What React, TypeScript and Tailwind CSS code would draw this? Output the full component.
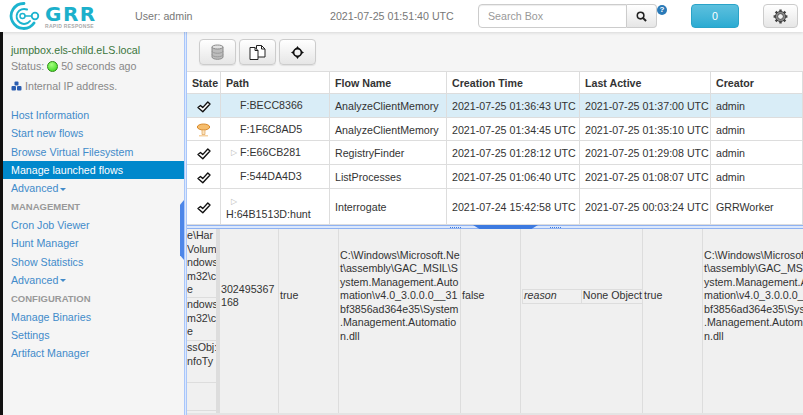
import type { ReactNode } from "react";

const FONT = "font-['Liberation_Sans',Arial,sans-serif]";

const SIDE_TOP = ["Host Information", "Start new flows", "Browse Virtual Filesystem"];
const MANAGEMENT = ["Cron Job Viewer", "Hunt Manager", "Show Statistics"];
const CONFIGURATION = ["Manage Binaries", "Settings", "Artifact Manager"];

const FLOWS = [
  { state: "ok", path: "F:BECC8366", name: "AnalyzeClientMemory", created: "2021-07-25 01:36:43 UTC", active: "2021-07-25 01:37:00 UTC", creator: "admin", h: "h-[24px]", selected: true },
  { state: "busy", path: "F:1F6C8AD5", name: "AnalyzeClientMemory", created: "2021-07-25 01:34:45 UTC", active: "2021-07-25 01:35:10 UTC", creator: "admin", h: "h-[23px]" },
  { state: "ok", path: "F:E66CB281", name: "RegistryFinder", created: "2021-07-25 01:28:12 UTC", active: "2021-07-25 01:29:08 UTC", creator: "admin", h: "h-[24px]", arrow: true },
  { state: "ok", path: "F:544DA4D3", name: "ListProcesses", created: "2021-07-25 01:06:40 UTC", active: "2021-07-25 01:08:07 UTC", creator: "admin", h: "h-[24px]" },
  { state: "ok", path: "H:64B1513D:hunt", name: "Interrogate", created: "2021-07-24 15:42:58 UTC", active: "2021-07-25 00:03:24 UTC", creator: "GRRWorker", h: "h-[36px]", arrow: true, wrap: true },
];

const DLL_PATH = "C:\\Windows\\Microsoft.Ne t\\assembly\\GAC_MSIL\\S ystem.Management.Auto mation\\v4.0_3.0.0.0__31 bf3856ad364e35\\System .Management.Automatio n.dll".split(" ");

function Logo() {
  return (
    <div className="flex w-[132px] shrink-0 items-center pl-[8px]">
      <svg width="34" height="30" viewBox="0 0 34 30" fill="none" className="shrink-0 text-[#1cb4cf]">
        <path d="M16 2.500 A12.500 12.500 0 1 0 26 22" stroke="currentColor" strokeWidth="2.800" strokeLinecap="round" />
        <path d="M19 8.500 A7.500 7.500 0 1 0 22 20" stroke="currentColor" strokeWidth="2" strokeLinecap="round" />
        <circle cx="14.500" cy="15" r="2.500" stroke="currentColor" strokeWidth="1.500" />
        <circle cx="27" cy="15" r="3.300" stroke="currentColor" strokeWidth="1.800" />
        <path d="M17 15 H23.700" stroke="currentColor" strokeWidth="1.500" />
      </svg>
      <div className="ml-[3px] mt-[3px] flex flex-col">
        <span className="h-[15px] overflow-visible text-[20px] leading-[15px] font-bold tracking-[1.5px] text-[#1cb0cb] font-['DejaVu_Sans',sans-serif]">GRR</span>
        <span className="mt-[1px] h-[6px] text-[5px] leading-[6px] font-bold tracking-[0.3px] text-[#aaa] whitespace-nowrap">RAPID RESPONSE</span>
      </div>
    </div>
  );
}

function GearIcon() {
  return (
    <svg width="15" height="15" viewBox="0 0 20 20">
      <path d="M10 .8v4M10 15.200v4M.8 10h4M15.200 10h4M3.500 3.500l2.800 2.800M13.700 13.700l2.800 2.800M16.500 3.500l-2.800 2.800M6.300 13.700l-2.800 2.800" stroke="#444" strokeWidth="3.200" />
      <circle cx="10" cy="10" r="6.800" fill="#8a8a8a" stroke="#333" strokeWidth="1" />
      <circle cx="10" cy="10" r="3.800" fill="#f0f0f0" stroke="#333" strokeWidth="1" />
    </svg>
  );
}

function Header() {
  return (
    <header className="relative z-10 flex h-[32px] shrink-0 items-center bg-white text-[10.67px] text-[#777] shadow-[0_1px_3px_rgba(0,0,0,0.12)]">
      <Logo />
      <span className="ml-[3px] w-[195px]">User: admin</span>
      <span className="w-[148px] whitespace-nowrap">2021-07-25 01:51:40 UTC</span>
      <div className="flex h-[24px] w-[179px]">
        <div className="flex w-[149px] items-center rounded-l-[4px] border border-[#ccc] bg-white pl-[9px] text-[#999] shadow-[inset_0_1px_1px_rgba(0,0,0,0.075)]">Search Box</div>
        <div className="flex w-[30px] items-center justify-center rounded-r-[4px] border border-l-0 border-[#ccc] bg-gradient-to-b from-white to-[#e6e6e6]">
          <svg width="11" height="11" viewBox="0 0 12 12" fill="none" stroke="#222">
            <circle cx="5" cy="5" r="3.600" strokeWidth="1.700" />
            <path d="M7.800 7.800 11 11" strokeWidth="2.200" />
          </svg>
        </div>
      </div>
      <div className="mb-[12px] flex h-[10px] w-[10px] items-center justify-center rounded-full bg-[#2a7ab8] text-[8px] font-bold leading-none text-white">?</div>
      <div className="ml-[24px] flex h-[24px] w-[48px] items-center justify-center rounded-[4px] border border-[#2aa3c8] bg-gradient-to-b from-[#5bc0de] to-[#2aabd2] text-white">0</div>
      <div className="ml-[24px] flex h-[24px] w-[35px] items-center justify-center rounded-[4px] border border-[#ccc] bg-gradient-to-b from-white to-[#e6e6e6]">
        <GearIcon />
      </div>
    </header>
  );
}

function NavItem({ label, active }: { label: string; active?: boolean }) {
  return (
    <div className={"flex h-[18.35px] items-center pl-[8px] " + (active ? "bg-[#0088cc] text-white" : "text-[#428bca]")}>
      {label}
    </div>
  );
}

function AdvancedItem() {
  return (
    <div className="flex h-[18.35px] items-center pl-[8px] text-[#428bca]">
      Advanced
      <span className="ml-[2px] mt-[1px] h-0 w-0 border-x-[3px] border-t-[3px] border-x-transparent border-t-[#428bca]" />
    </div>
  );
}

function NavHeading({ children }: { children: ReactNode }) {
  return <div className="flex h-[18.35px] items-center pl-[8px] text-[9.5px] font-bold text-[#999]">{children}</div>;
}

function Sidebar() {
  return (
    <aside className="w-[181px] shrink-0 bg-[#f5f5f5] pt-[10px] text-[10.67px] leading-none">
      <div className="pl-[8px] text-[#888]">
        <div className="flex h-[16px] items-center text-[#3c763d]">jumpbox.els-child.eLS.local</div>
        <div className="flex h-[16px] items-center whitespace-nowrap">
          Status:
          <span className="mx-[3px] h-[11px] w-[11px] rounded-full border border-[#2a8a12] bg-[radial-gradient(circle_at_40%_30%,#a6ff80,#2fd312)]" />
          50 seconds ago
        </div>
        <div className="mt-[3px] flex h-[18px] items-center">
          <svg width="11" height="10" viewBox="0 0 11 10" fill="#2a5db0" className="mr-[3px]">
            <rect x="3.500" y="0.500" width="4" height="4" rx="1" />
            <rect x="0.500" y="5" width="4.500" height="4.500" rx="1" />
            <rect x="6" y="5" width="4.500" height="4.500" rx="1" />
          </svg>
          Internal IP address.
        </div>
      </div>
      <nav className="mt-[11px]">
        {SIDE_TOP.map((l) => <NavItem key={l} label={l} />)}
        <NavItem label="Manage launched flows" active />
        <AdvancedItem />
        <NavHeading>MANAGEMENT</NavHeading>
        {MANAGEMENT.map((l) => <NavItem key={l} label={l} />)}
        <AdvancedItem />
        <NavHeading>CONFIGURATION</NavHeading>
        {CONFIGURATION.map((l) => <NavItem key={l} label={l} />)}
      </nav>
    </aside>
  );
}

function StateIcon({ state }: { state: string }) {
  if (state === "busy") {
    return (
      <svg width="15" height="16" viewBox="0 0 15 16">
        <ellipse cx="7.500" cy="5" rx="6.200" ry="3" fill="#f6bd6c" stroke="#d98a2b" />
        <path d="M6 8h3v4.500H6z" fill="#fbe2bc" stroke="#e0a55a" strokeWidth="0.700" />
        <path d="M3 13h9v1.500H3z" fill="#f5d2a3" />
      </svg>
    );
  }
  return (
    <svg width="14" height="12" viewBox="0 0 14 12">
      <path d="M1 6.500 3.500 4.500 5.700 6.600 10.800 1 13 3 5.800 10.800Z" fill="#fff" stroke="#111" strokeWidth="1.400" strokeLinejoin="round" />
    </svg>
  );
}

function ToolButton({ children }: { children: ReactNode }) {
  return (
    <div className="flex h-[26px] w-[37px] items-center justify-center rounded-[4px] border border-[#ccc] bg-gradient-to-b from-white to-[#e6e6e6] shadow-[0_1px_1px_rgba(0,0,0,0.08)]">
      {children}
    </div>
  );
}

function Toolbar() {
  return (
    <div className="flex h-[39px] shrink-0 gap-[3px] bg-[#f5f5f5] pl-[12px] pt-[7px]">
      <ToolButton>
        <svg width="13" height="16" viewBox="0 0 13 16">
          <path d="M1 3v10c0 1.300 2.500 2.300 5.500 2.300S12 14.300 12 13V3Z" fill="#bdbdbd" stroke="#8a8a8a" />
          <path d="M1 7c0 1.300 2.500 2.300 5.500 2.300S12 8.300 12 7M1 10.500c0 1.300 2.500 2.300 5.500 2.300s5.500-1 5.500-2.300" fill="none" stroke="#9a9a9a" />
          <ellipse cx="6.500" cy="3" rx="5.500" ry="2" fill="#e2e2e2" stroke="#8a8a8a" />
        </svg>
      </ToolButton>
      <ToolButton>
        <svg width="17" height="16" viewBox="0 0 17 16" fill="#fff" stroke="#222" strokeWidth="1">
          <path d="M7.500 1.500h5l3.500 3.500v8H7.500z" />
          <path d="M1 3.500h5l3 3v9H1z" />
          <path d="M6 3.500v3h3M12.500 1.500V5H16" fill="none" />
        </svg>
      </ToolButton>
      <ToolButton>
        <svg width="13" height="13" viewBox="0 0 14 14" fill="none">
          <circle cx="7" cy="7" r="4.200" stroke="#111" strokeWidth="1.800" />
          <path d="M7 0 9 3H5ZM7 14 5 11h4ZM0 7l3-2v4ZM14 7l-3 2V5Z" fill="#111" />
        </svg>
      </ToolButton>
    </div>
  );
}

const COLS = ["w-[34px]", "w-[109px]", "w-[117px]", "w-[133px]", "w-[131px]", "w-[92px]"];

function FlowTable() {
  const th = "flex shrink-0 items-center whitespace-nowrap border-r border-[#ddd] pl-[5px] pt-[2px]";
  return (
    <div className="shrink-0 bg-white text-[10.67px] leading-[13px] text-[#333]">
      <div className="flex h-[23px] border-y border-[#ddd] font-bold">
        {["State", "Path", "Flow Name", "Creation Time", "Last Active", "Creator"].map((t, i) => (
          <div key={t} className={th + " " + COLS[i]}>{t}</div>
        ))}
      </div>
      {FLOWS.map((f) => (
        <div key={f.path} className={"flex border-b border-[#ddd] " + f.h + (f.selected ? " bg-[#d9edf7]" : "")}>
          <div className={"flex shrink-0 items-center justify-center border-r border-[#ddd] pt-[2px] " + COLS[0]}><StateIcon state={f.state} /></div>
          <div className={"shrink-0 border-r border-[#ddd] pl-[5px] " + COLS[1] + (f.wrap ? " flex flex-col" : " flex items-center")}>
            {f.wrap ? (
              <>
                <span className="ml-[5px] mt-[6px] h-[13px] text-[8px] leading-[13px] text-[#bbb]">▷</span>
                <span className="whitespace-nowrap">{f.path}</span>
              </>
            ) : (
              <>
                <span className="w-[14px] pl-[5px] text-[8px] text-[#bbb]">{f.arrow ? "▷" : ""}</span>
                <span className="whitespace-nowrap">{f.path}</span>
              </>
            )}
          </div>
          <div className={th + " " + COLS[2]}>{f.name}</div>
          <div className={th + " " + COLS[3]}>{f.created}</div>
          <div className={th + " " + COLS[4]}>{f.active}</div>
          <div className={th + " " + COLS[5]}>{f.creator}</div>
        </div>
      ))}
    </div>
  );
}

function Lines({ lines }: { lines: string[] }) {
  return <>{lines.map((l) => <div key={l} className="whitespace-nowrap">{l}</div>)}</>;
}

function ClippedCell({ lines, h }: { lines: string[]; h: string }) {
  return (
    <div className={"overflow-hidden border-b border-[#ddd] " + h}>
      {lines.map((l) => <div key={l} className="h-[13.5px] whitespace-nowrap">{l}</div>)}
    </div>
  );
}

function Cell({ w, children }: { w: string; children: ReactNode }) {
  return (
    <div className={"h-full shrink-0 border-r border-[#ddd] pl-[1px] " + w}>
      <div className="flex h-[134px] items-center">{children}</div>
    </div>
  );
}

function DetailPane() {
  return (
    <div className="min-h-0 flex-1 overflow-hidden border-b-[2px] border-[#e4e4e4] bg-[#f0f0f0] text-[10.67px] leading-[13.5px] text-[#333]">
      <div className="flex h-full">
        <div className="w-[29px] shrink-0 overflow-hidden">
          <ClippedCell h="h-[69px]" lines={["e\\Har", "Volum", "ndows", "m32\\c", "e"]} />
          <ClippedCell h="h-[43px]" lines={["ndows", "m32\\c", "e"]} />
          <ClippedCell h="h-[42px]" lines={["ssObj:I", "nfoTy"]} />
          <ClippedCell h="h-[28px]" lines={[]} />
        </div>
        <div className="w-[4px] shrink-0 bg-[#ddd]" />
        <Cell w="w-[59px]"><div>302495367<br />168</div></Cell>
        <Cell w="w-[60px]">true</Cell>
        <Cell w="w-[122px]"><div><Lines lines={DLL_PATH} /></div></Cell>
        <Cell w="w-[60px]">false</Cell>
        <Cell w="w-[122px]">
          <div className="flex h-[15px] w-[121px] items-center border border-[#ddd]">
            <div className="flex h-full w-[60px] items-center border-r border-[#ddd] pl-[1px] italic">reason</div>
            <div className="whitespace-nowrap pl-[1px]">None Object</div>
          </div>
        </Cell>
        <Cell w="w-[60px]">true</Cell>
        <div className="h-full shrink-0 pl-[1px]">
          <div className="flex h-[134px] items-center"><div><Lines lines={DLL_PATH} /></div></div>
        </div>
      </div>
    </div>
  );
}

export default function App() {
  return (
    <div className={"relative flex h-[415px] w-[803px] flex-col overflow-hidden bg-white " + FONT}>
      <Header />
      <div className="flex min-h-0 flex-1">
        <div className="w-[3px] shrink-0 bg-[#111]" />
        <Sidebar />
        <div className="w-[3px] shrink-0 border-x border-[#a9c6fa] bg-[#dce8fc]" />
        <main className="flex min-w-0 flex-1 flex-col">
          <Toolbar />
          <FlowTable />
          <div className="h-[4px] shrink-0 border-y border-[#8fb2f2] bg-[#dce8fc]" />
          <DetailPane />
        </main>
      </div>
      {/* splitter handles sit over the pane borders */}
      <div className="absolute left-[180px] top-[200px] h-[60px] w-[4px] bg-[#4d86e8] [clip-path:polygon(100%_0,100%_100%,0_92%,0_8%)]" />
      <div className="absolute left-[473px] top-[225px] h-[4px] w-[65px] bg-[#3d7ae0] [clip-path:polygon(0_0,100%_0,90%_100%,10%_100%)]" />
      <div className="absolute left-[450px] top-[227px] h-[1px] w-[11px] border-t border-dotted border-[#3d7ae0]" />
      <div className="absolute left-[550px] top-[227px] h-[1px] w-[11px] border-t border-dotted border-[#3d7ae0]" />
    </div>
  );
}
